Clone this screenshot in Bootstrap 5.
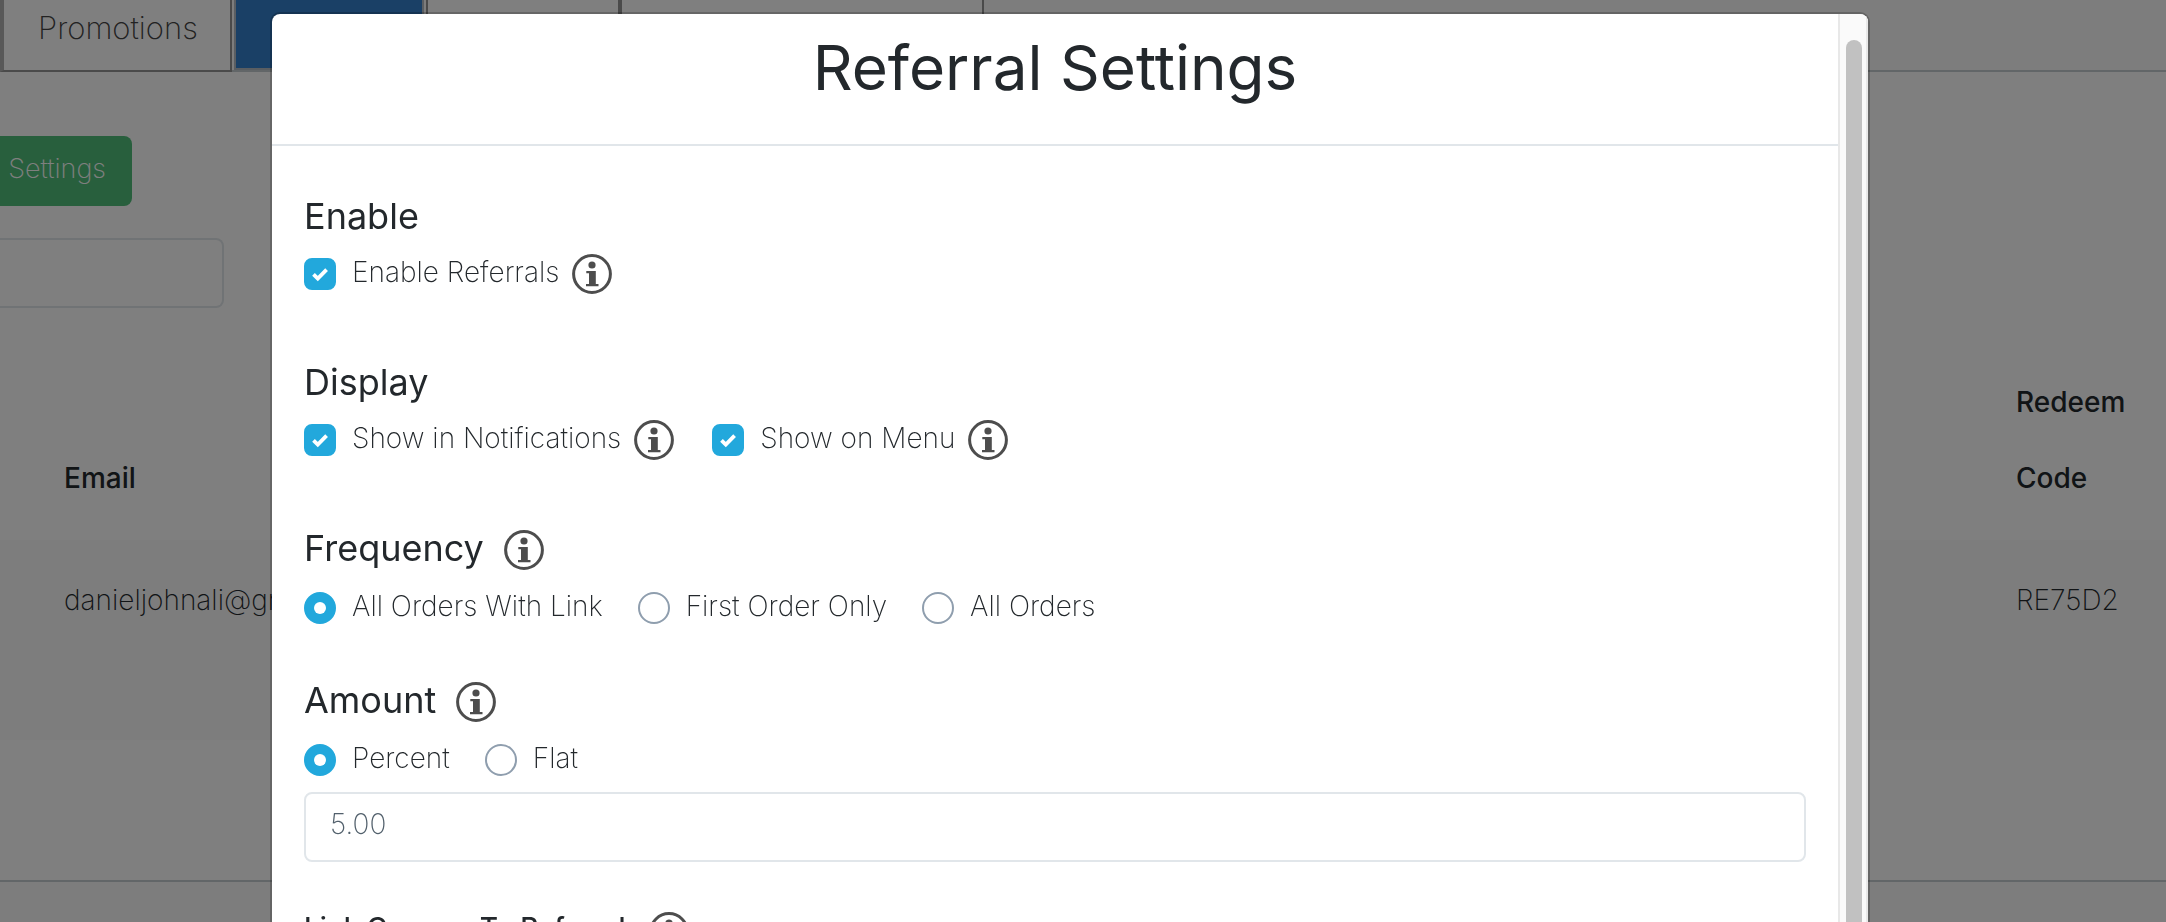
<!DOCTYPE html>
<html lang="en">
<head>
<meta charset="utf-8">
<meta name="viewport" content="width=device-width, initial-scale=1">
<title>Referral Settings</title>
<link href="https://cdn.jsdelivr.net/npm/bootstrap@5.3.0/dist/css/bootstrap.min.css" rel="stylesheet">
<script src="https://cdn.jsdelivr.net/npm/bootstrap@5.3.0/dist/js/bootstrap.bundle.min.js"></script>
<style>
  :root { --ink: #23282c; --accent: #22a8dc; --line: #e1e6ea; }
  body {
    font-family: Inter, "Open Sans", sans-serif;
    font-size: 28px; font-weight: 200; line-height: 40px;
    color: var(--ink); background: #fafafa; overflow: hidden;
  }

  /* page behind the dialog */
  .tab-strip { height: 72px; background: #fafafa; border-bottom: 2px solid #c5ccd0; }
  .tab-item {
    height: 72px; background: #fff; border: solid #959595; border-width: 0 2px 2px;
    color: #444; font-size: 31px; text-decoration: none; padding: 8px 34px;
  }
  .tab-first { border-left: 4px solid #b0b0b0; width: 232px; }
  .tab-current { width: 190px; height: 70px; margin: 0 2px; background: #3480cc; border-color: #b4bcc4; }
  .tab-third { width: 194px; }
  .tab-fourth { width: 364px; }
  .page-panel { background: #fff; border-bottom: 2px solid #c5ccd0; height: 810px; }
  .settings-btn {
    width: 132px; height: 70px; margin-top: 64px; padding: 0 26px 4px 0;
    background: #50be7a; color: #fff; border: 0; border-radius: 0 8px 8px 0;
    white-space: nowrap; overflow: hidden; font-size: 27px; font-weight: 200;
  }
  .search-box {
    width: 224px; height: 70px; margin-top: 32px; border: 2px solid var(--line);
    border-left: 0; border-radius: 0 8px 8px 0; background: #fff;
  }
  .people { table-layout: fixed; width: 100%; margin-top: 34px; line-height: 76px; }
  .people th, .people td { padding: 22px 0; vertical-align: bottom; }
  .people th:first-child, .people td:first-child { padding-left: 64px; }
  .people th { font-weight: 500; padding-bottom: 24px; }
  .people td { height: 200px; vertical-align: top; background: #fafafa; }
  .code-col { width: 150px; }

  /* dialog */
  .modal-backdrop { --bs-backdrop-opacity: .5; }
  .modal { overflow: hidden; }
  .modal-dialog { max-width: none; height: calc(100vh - 12px); margin: 12px 296px 0 270px; }
  .modal-content {
    height: 100%; flex-direction: row; border: 2px solid rgba(0,0,0,.2); border-bottom: 0;
    border-radius: 10px 10px 0 0; background-clip: padding-box; overflow: hidden; color: var(--ink);
  }
  .scroll-pane { overflow: hidden; min-width: 0; }
  .scroll-track { width: 30px; padding: 26px 4px 0 6px; background: #fafafa; border: solid #e8e8e8; border-width: 0 2px; }
  .scroll-thumb { height: 100%; background: #c1c1c1; border-radius: 8px 8px 0 0; }
  .modal-header { height: 132px; padding: 0 0 22px; border-bottom: 2px solid var(--line); border-radius: 0; justify-content: center; }
  .modal-title { font-size: 62px; line-height: 80px; font-weight: 425; }
  .modal-body { padding: 50px 32px 0; }
  .group { margin: 0 0 68px; }
  .group-tight { margin-bottom: 52px; }
  .group-name { font-size: 36px; line-height: 40px; font-weight: 425; margin: 0 0 18px; }
  .group-name .info-icon { margin: 2px 0 0 20px; }
  .group-last { margin-bottom: 50px; }
  .sub-name { font-size: 28px; line-height: 32px; font-weight: 500; }
  .sub-name .info-icon { margin: 0 0 0 8px; }
  .choices { height: 40px; }
  .choices label { padding: 0 0 4px 16px; }
  .choices .info-icon { margin: 0 38px 0 13px; }
  .choices .form-check-input { width: 32px; height: 32px; margin: 0; border: 2px solid #8f9eae; background-size: 100%; }
  .choices .form-check-input[type=checkbox] { border-radius: 8px; }
  .choices .form-check-input:checked { background-color: var(--accent); border-color: var(--accent); }
  .choices .form-check-input[type=checkbox]:checked {
    background-image: url("data:image/svg+xml,%3Csvg xmlns='http://www.w3.org/2000/svg' viewBox='0 0 28 28'%3E%3Cpath fill='none' stroke='%23fff' stroke-width='3.8' d='M7.5 14.3l4.3 4.3 8.8-9'/%3E%3C/svg%3E");
  }
  .choices .form-check-input[type=radio]:checked {
    background-image: url("data:image/svg+xml,%3Csvg xmlns='http://www.w3.org/2000/svg' viewBox='0 0 28 28'%3E%3Ccircle cx='14' cy='14' r='6' fill='%23fff'/%3E%3C/svg%3E");
  }
  .radio-pair { margin-right: 35px; }
  .info-icon { width: 40px; height: 40px; flex: none; color: #4d4d4d; }
  .amount-box {
    height: 70px; padding: 0 24px 6px; border: 2px solid var(--line); border-radius: 8px;
    font-size: 28px; font-weight: 200; color: #52606c; margin-top: 12px;
  }
</style>
</head>
<body>
<svg class="d-none" aria-hidden="true">
  <symbol id="info" viewBox="0 0 40 40">
    <circle cx="20" cy="20" r="18.4" fill="none" stroke="currentColor" stroke-width="3"/>
    <circle cx="20" cy="11" r="3.6" fill="currentColor"/>
    <path fill="currentColor" d="M14.300 17h9.500v13h2.700v2.200h-12.500V30h3V19.200h-2.700z"/>
  </symbol>
</svg>

<nav class="tab-strip d-flex">
  <a class="tab-item tab-first" href="#">Promotions</a>
  <a class="tab-item tab-current" href="#" aria-label="Referrals"></a>
  <a class="tab-item tab-third" href="#" aria-label="Rewards"></a>
  <a class="tab-item tab-fourth" href="#" aria-label="Notifications"></a>
</nav>
<main class="page-panel overflow-hidden">
  <button class="settings-btn d-flex justify-content-end align-items-center" type="button">Referral Settings</button>
  <input class="search-box d-block" type="text" aria-label="Search">
  <table class="people">
    <thead><tr><th>Email</th><th class="code-col">Redeem Code</th></tr></thead>
    <tbody><tr><td>danieljohnali@gmail.com</td><td>RE75D2</td></tr></tbody>
  </table>
</main>

<div class="modal-backdrop show"></div>
<div class="modal show d-block" tabindex="-1" role="dialog" aria-labelledby="dialogTitle">
  <div class="modal-dialog">
    <div class="modal-content">
      <div class="scroll-pane flex-grow-1">
        <div class="modal-header"><h1 class="modal-title" id="dialogTitle">Referral Settings</h1></div>
        <form class="modal-body">
          <section class="group">
            <h2 class="group-name">Enable</h2>
            <div class="choices d-flex align-items-center">
              <input class="form-check-input" type="checkbox" id="enable" checked><label for="enable">Enable Referrals</label>
              <svg class="info-icon"><use href="#info"/></svg>
            </div>
          </section>
          <section class="group">
            <h2 class="group-name">Display</h2>
            <div class="choices d-flex align-items-center">
              <input class="form-check-input" type="checkbox" id="notify" checked><label for="notify">Show in Notifications</label>
              <svg class="info-icon"><use href="#info"/></svg>
              <input class="form-check-input" type="checkbox" id="menu" checked><label for="menu">Show on Menu</label>
              <svg class="info-icon"><use href="#info"/></svg>
            </div>
          </section>
          <section class="group group-tight">
            <h2 class="group-name d-flex">Frequency<svg class="info-icon"><use href="#info"/></svg></h2>
            <div class="choices d-flex align-items-center">
              <div class="radio-pair d-flex align-items-center"><input class="form-check-input" type="radio" name="freq" id="linked" checked><label for="linked">All Orders With Link</label></div>
              <div class="radio-pair d-flex align-items-center"><input class="form-check-input" type="radio" name="freq" id="first"><label for="first">First Order Only</label></div>
              <div class="radio-pair d-flex align-items-center"><input class="form-check-input" type="radio" name="freq" id="all"><label for="all">All Orders</label></div>
            </div>
          </section>
          <section class="group group-last">
            <h2 class="group-name d-flex">Amount<svg class="info-icon"><use href="#info"/></svg></h2>
            <div class="choices d-flex align-items-center">
              <div class="radio-pair d-flex align-items-center"><input class="form-check-input" type="radio" name="kind" id="percent" checked><label for="percent">Percent</label></div>
              <div class="radio-pair d-flex align-items-center"><input class="form-check-input" type="radio" name="kind" id="flat"><label for="flat">Flat</label></div>
            </div>
            <input class="form-control amount-box" type="text" value="5.00" aria-label="Amount">
          </section>
          <h3 class="group-name sub-name d-flex">Link Coupon To Referrals<svg class="info-icon"><use href="#info"/></svg></h3>
        </form>
      </div>
      <div class="scroll-track flex-shrink-0"><div class="scroll-thumb"></div></div>
    </div>
  </div>
</div>
</body>
</html>
